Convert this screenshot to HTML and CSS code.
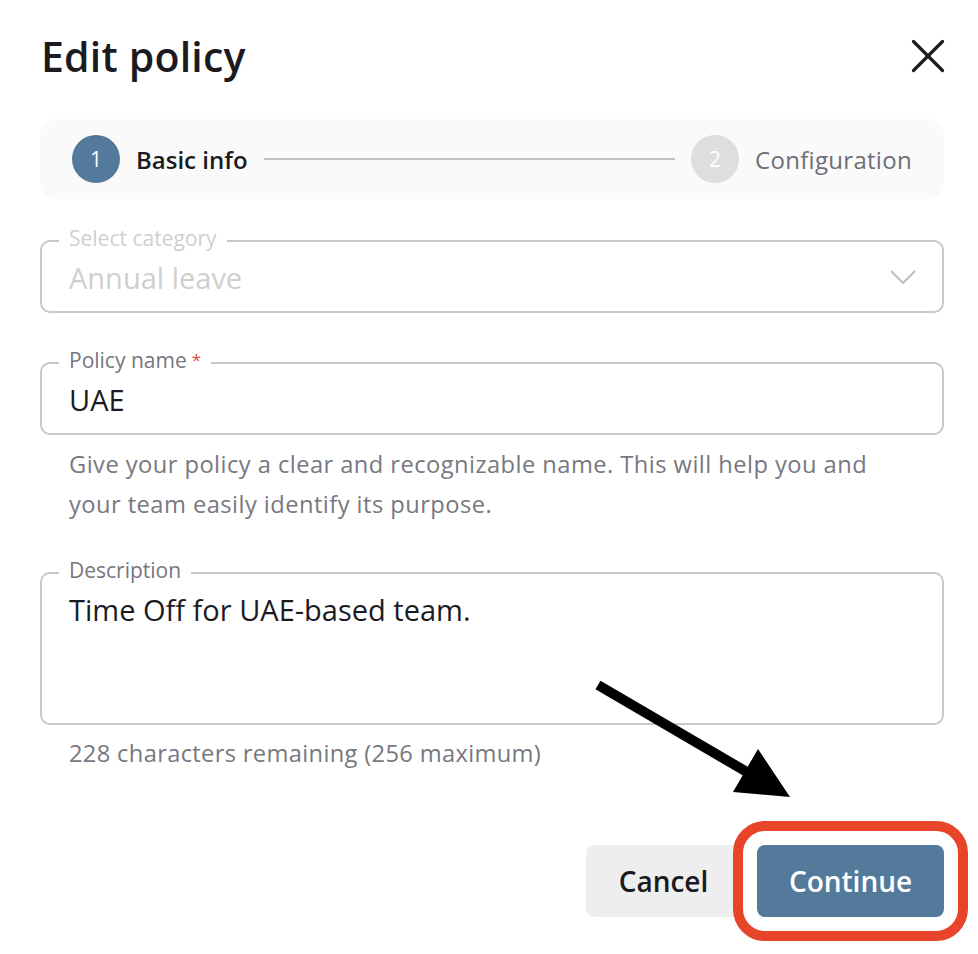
FILE: index.html
```html
<!DOCTYPE html>
<html lang="en">
<head>
<meta charset="utf-8">
<title>Edit policy</title>
<link rel="stylesheet" href="styles.css">
</head>
<body>
<div class="dialog">
  <header class="head">
    <h1 class="title">Edit policy</h1>
    <button class="close" aria-label="Close">
      <svg width="34" height="34" viewBox="0 0 34 34"><path d="M2.5 2.5 L31.5 31.5 M31.5 2.5 L2.5 31.5" stroke="#1b1b1f" stroke-width="3.2" stroke-linecap="round" fill="none"/></svg>
    </button>
  </header>

  <div class="stepper">
    <div class="step active"><span class="dot">1</span><span class="step-label">Basic info</span></div>
    <div class="step-line"></div>
    <div class="step"><span class="dot">2</span><span class="step-label">Configuration</span></div>
  </div>

  <fieldset class="field disabled">
    <legend class="field-label">Select category</legend>
    <div class="field-row">
      <span class="value">Annual leave</span>
      <svg class="chevron" width="26" height="15" viewBox="0 0 26 15"><path d="M1.5 1.5 L13 13 L24.5 1.5" stroke="#bdbdbd" stroke-width="2" fill="none" stroke-linecap="round" stroke-linejoin="round"/></svg>
    </div>
  </fieldset>

  <fieldset class="field name">
    <legend class="field-label">Policy name<span class="req">*</span></legend>
    <div class="field-row"><span class="value">UAE</span></div>
  </fieldset>
  <p class="helper">Give your policy a clear and recognizable name. This will help you and your team easily identify its purpose.</p>

  <fieldset class="field desc">
    <legend class="field-label">Description</legend>
    <div class="field-row"><span class="value">Time Off for UAE-based team.</span></div>
  </fieldset>
  <p class="counter">228 characters remaining (256 maximum)</p>

  <div class="actions">
    <button class="btn cancel">Cancel</button>
    <button class="btn primary">Continue</button>
  </div>

  <svg class="arrow" width="978" height="954" viewBox="0 0 978 954">
    <line x1="598" y1="685" x2="752" y2="775" stroke="#000" stroke-width="10"/>
    <polygon points="733,792 758,749 790,797" fill="#000"/>
  </svg>
</div>
</body>
</html>
```
FILE: styles.css
```css
* { box-sizing: border-box; }
html, body { margin: 0; padding: 0; background: #fff; }
body {
  font-family: "Open Sans", "Liberation Sans", sans-serif;
  color: #1b1b1f;
  width: 978px;
  height: 954px;
  overflow: hidden;
}
.dialog {
  position: relative;
  padding: 40px 34px 0 40px;
  height: 954px;
}
.head {
  display: flex;
  align-items: center;
  justify-content: space-between;
  height: 32px;
}
.title {
  margin: 0 0 0 1px;
  font-size: 41px;
  line-height: 28px;
  font-weight: 600;
  letter-spacing: 0.2px;
}
.close {
  border: 0;
  background: none;
  padding: 0;
  width: 34px;
  height: 34px;
  margin-right: -1px;
  display: flex;
}
.stepper {
  margin-top: 47px;
  height: 80px;
  background: #fafafa;
  border-radius: 16px;
  padding: 0 32px;
  display: flex;
  align-items: center;
}
.step { display: flex; align-items: center; gap: 16px; }
.dot {
  width: 48px; height: 48px; border-radius: 50%;
  background: #dedede; color: #fff;
  display: flex; align-items: center; justify-content: center;
  font-size: 21px; font-weight: 500;
}
.step.active .dot { background: #537a9b; }
.step-label { font-size: 24px; color: #6e6e76; letter-spacing: 0.3px; }
.step.active .step-label { color: #1b1b1f; font-weight: 600; letter-spacing: 0; }
.step-line { flex: 1; height: 2px; background: #c2c2c2; margin: 0 16px; }

.field {
  margin: 29px 0 0;
  border: 2px solid #c8c8c8;
  border-radius: 10px;
  padding: 7px 26px 16px 27px;
  min-width: 0;
}
.field.name { margin-top: 37px; }
.field.desc { margin-top: 36px; height: 165px; }
.field-label {
  padding: 0 10px 6px;
  margin-left: -10px;
  font-size: 21px;
  line-height: 20px;
  color: #76767e;
}
.req { color: #e5483a; font-size: 17px; vertical-align: top; margin-left: 5px; }
.field-row { display: flex; align-items: center; justify-content: space-between; }
.value { font-size: 29px; line-height: 34px; color: #1b1b1f; }
.disabled .field-label, .disabled .value { color: #cfcfd1; }
.chevron { margin-top: -2px; }

.helper {
  margin: 9px 0 0 29px;
  font-size: 23.7px;
  line-height: 40px;
  color: #777880;
  letter-spacing: 0.45px;
  max-width: 850px;
}
.counter {
  margin: 13px 0 0 29px;
  font-size: 23.7px;
  line-height: 30px;
  color: #777880;
  letter-spacing: 0.33px;
}
.actions {
  margin-top: 77px;
  display: flex;
  justify-content: flex-end;
  gap: 16px;
}
.btn {
  height: 72px;
  border: 0;
  border-radius: 8px;
  font-family: inherit;
  font-size: 28px;
  font-weight: 600;
}
.cancel { width: 155px; background: #eeeeee; color: #1b1b1f; }
.primary {
  width: 187px;
  background: #537a9b;
  color: #fff;
  outline: 10px solid #e84429;
  outline-offset: 14px;
}
.arrow { position: absolute; left: 0; top: 0; pointer-events: none; }
```
